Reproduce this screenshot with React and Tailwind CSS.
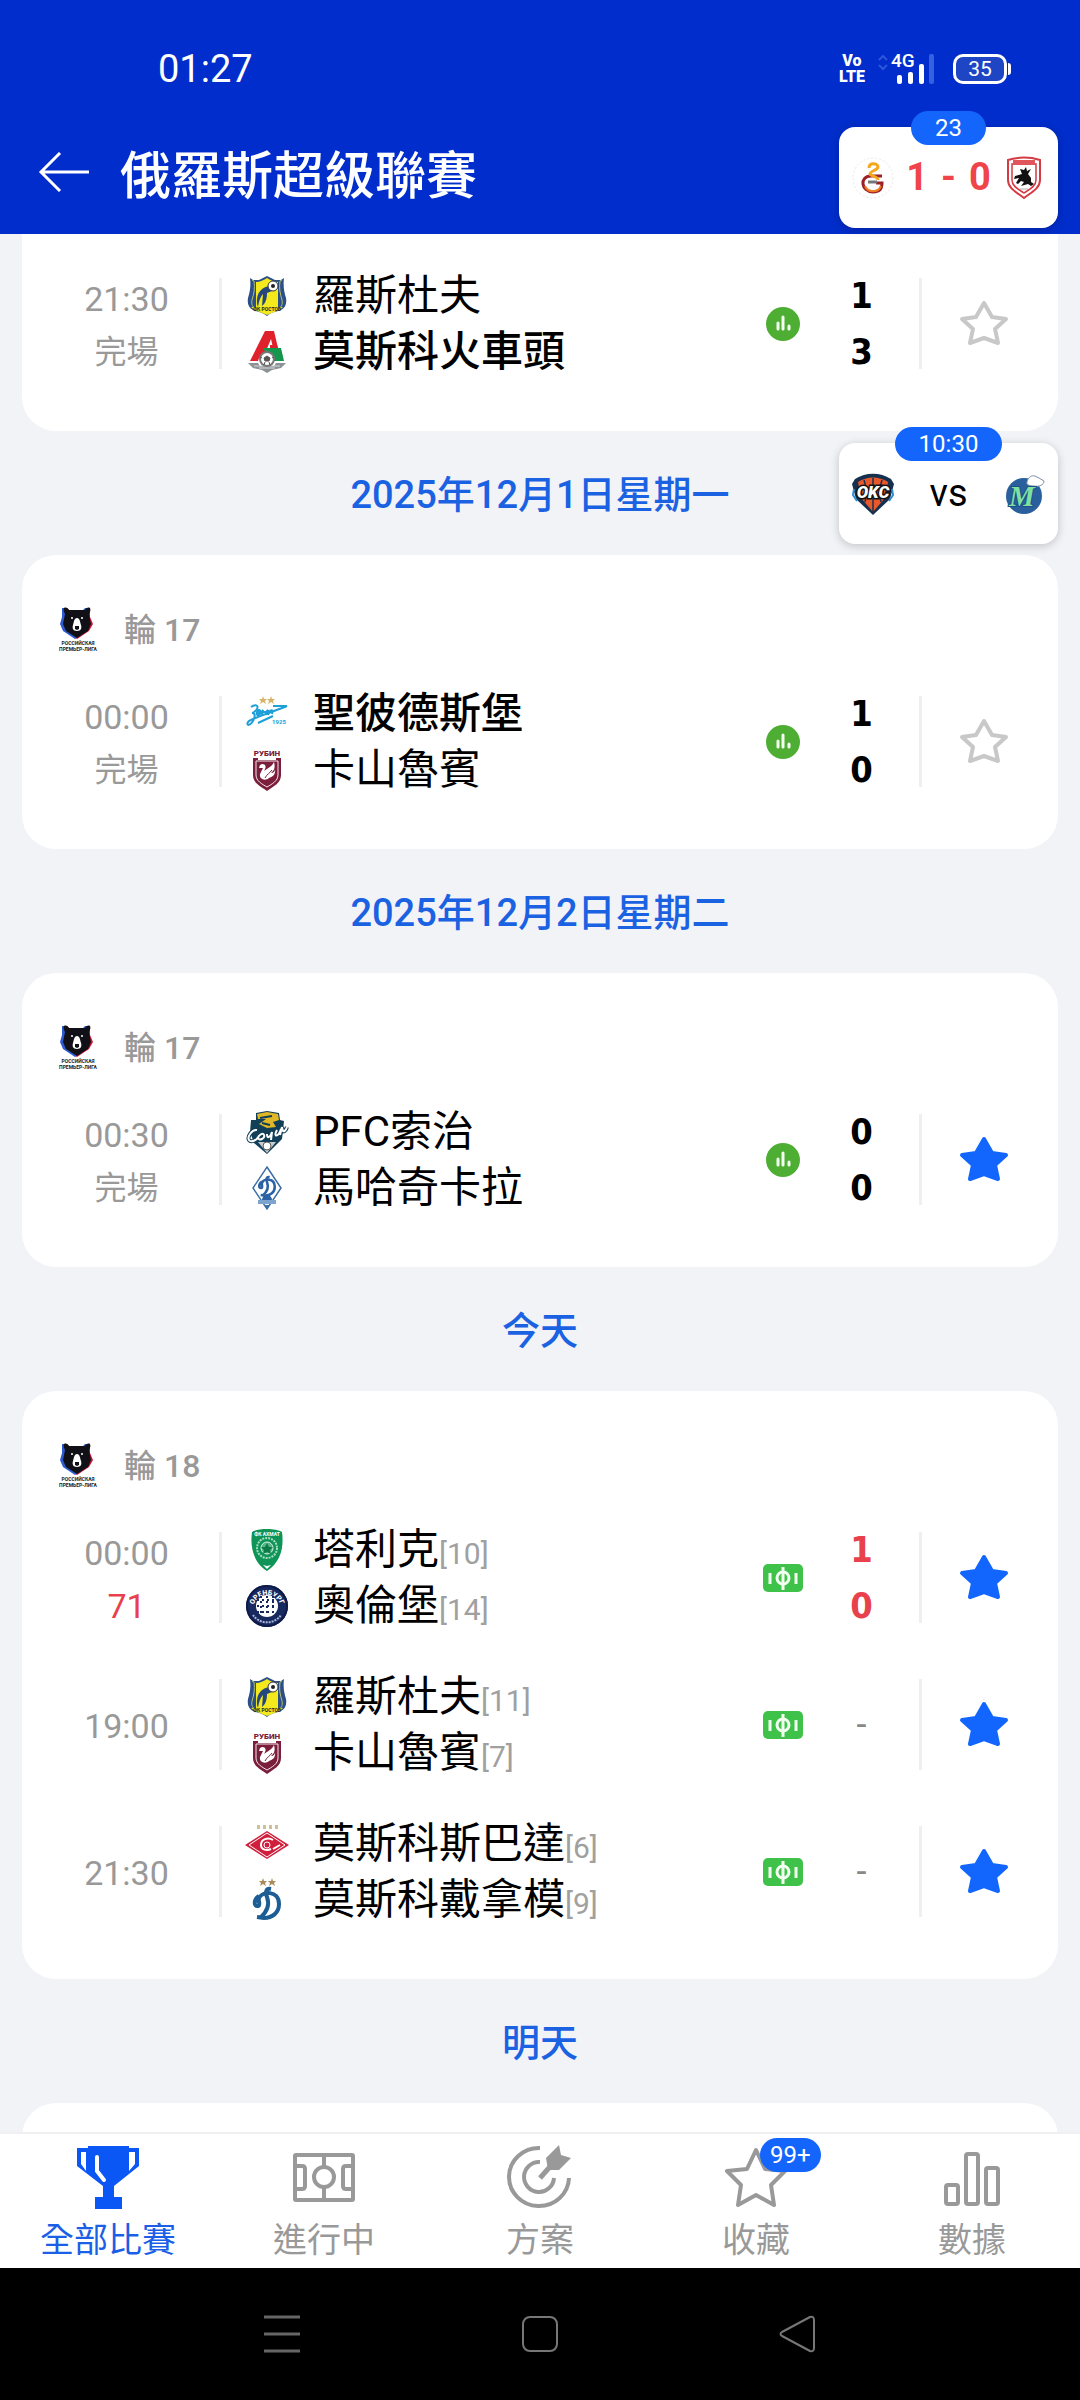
import { useState } from "react";

const LeagueLogo = () => (
    <svg viewBox="0 0 44 48" className="h-12 w-11" aria-hidden="true">
        <path d="M8 2l3 0 3 3h14l3-3h3v9l3 7-4 7-12 8-12-8-4-7 3-7z" fill="#d3122f" />
        <path d="M6 2l3 0 3 3h14l3-3h3v9l2 7-3 7-12 8-12-8-3-7 2-7z" fill="#2d5bd0" />
        <path d="M8 2c2-1 4 0 5 2h16c1-2 3-3 5-2 1 2 0 4-1 6l2 10-3 7-11 7-11-7-3-7 2-10c-1-2-2-4-1-6z" fill="#111016" />
        <path d="M21 12c3 0 3 4 4 7s0 6-4 6-5-3-4-6 1-7 4-7z" fill="#fff" />
        <path d="M19 20h4v3l-2 1-2-1z" fill="#111016" />
        <circle cx="16" cy="12" r="1" fill="#fff" />
        <circle cx="26" cy="12" r="1" fill="#fff" />
        <text x="22" y="39" textAnchor="middle" fontSize="5" fontWeight="700" fill="#222">РОССИЙСКАЯ</text>
        <text x="22" y="45" textAnchor="middle" fontSize="5" fontWeight="700" fill="#222">ПРЕМЬЕР-ЛИГА</text>
    </svg>
);

const Rostov = () => (
    <>
        <path d="M5 4l3 2h6l8-4 8 4h6l3-2c-1 8 0 13 2 20 1 6-1 10-5 12-5 2-10 2-14 6-4-4-9-4-14-6-4-2-6-6-5-12 2-7 3-12 2-20z" fill="#2b4f86" />
        <path d="M7 6l2 1c1 8 0 12-2 19-1 5 1 7 3 8M37 6l-2 1c-1 8 0 12 2 19 1 5-1 7-3 8" fill="none" stroke="#b9c46a" />
        <path d="M11 8c4 0 8-2 11-4 3 2 7 4 11 4v25c-3 3-7 3-11 7-4-4-8-4-11-7z" fill="#f4e91c" />
        <path d="M25 12c-8 1-14 6-13 18l1 3c1-6 2-10 5-13l-1 12c4-3 5-8 5-13l5-2z" fill="#24477f" />
        <circle cx="28" cy="12" r="5" fill="#fff" stroke="#333" />
        <circle cx="28" cy="12" r="2" fill="#222" />
        <path d="M6 33h32l-4 3-12 5-12-5z" fill="#f4e91c" />
        <text x="22" y="37" textAnchor="middle" fontSize="5" fontWeight="700" fill="#222">ФК РОСТОВ</text>
    </>
);

const Lokomotiv = () => (
    <>
        <path d="M5 31h8l1-3h4L26 9l2 9h5L29 1h-9z" fill="#e0202b" />
        <path d="M18 18h18l3 13H25z" fill="#14964c" />
        <path d="M25 18h8l-1-3h-7z" fill="#e0202b" />
        <path d="M3 33h10l2 3h14l2-3h10l-5 5-9 2-5 3-5-3-9-2z" fill="#8d9295" />
        <path d="M9 36h26M14 38h16" stroke="#d6d9db" />
        <circle cx="22" cy="29" r="7" fill="#fff" stroke="#777" strokeWidth="2" />
        <path d="M22 26l3 2-1 3h-4l-1-3zM15 27l2 1M29 27l-2 1M19 35l1-3M25 35l-1-3" fill="#555" stroke="#555" />
    </>
);

const Zenit = () => (
    <>
        <path d="M18 4l1 3h3l-2 2 1 3-3-2-3 2 1-3-2-2h3zM26 4l1 3h3l-2 2 1 3-3-2-3 2 1-3-2-2h3z" fill="#d8b366" />
        <path d="M6 15c4-3 8-2 6 2-1 2-4 4-5 4 4 0 3 4 1 8-3 5-7 5-5 1 3-4 20-8 39-16H28" fill="none" stroke="#1e9fd8" strokeWidth="2" />
        <path d="M12 22c3-2 4-4 2-4s-4 6 0 5l4-5-1 5m1-3h3l2-2-2 5m4-5l-2 5m1-3c3-3 4-2 3 2M13 31l15-7" fill="none" stroke="#1e9fd8" strokeWidth="2" />
        <text x="34" y="32" textAnchor="middle" fontSize="6" fontWeight="700" fill="#1e9fd8">1925</text>
    </>
);

const Rubin = () => (
    <>
        <path d="M8 10h28v17c0 8-7 11-14 16C15 38 8 35 8 27z" fill="#7b1e3c" />
        <path d="M11 13h22v14c0 6-6 9-11 12-5-3-11-6-11-12z" fill="none" stroke="#f3e6ea" />
        <rect x="13" y="8" width="18" height="4" fill="#fff" />
        <text x="22" y="8" textAnchor="middle" fontSize="8" fontWeight="900" fill="#7b1e3c">РУБИН</text>
        <path d="M15 17c4-3 7 1 5 4l-2 5c1-6 8-5 11-12 2 7-1 9-3 11 3 0 4-2 4-4 1 6-3 8-6 9-3 3-10 2-9-4l3-6-4 0z" fill="#fff" />
        <path d="M20 30c2-4 5-5 7-8" fill="none" stroke="#7b1e3c" />
    </>
);

const Sochi = () => (
    <>
        <path d="M11 3l11-2 12 2 1 7 4 1-2 18-15 15L9 33 5 22l1-12 5 0z" fill="#123f58" />
        <path d="M12 4l10-2 11 2 1 6-6 2 3 5-9 1-8-4 7-5-8 0z" fill="#dfb727" />
        <path d="M15 8l12-2M17 13l8 2" stroke="#123f58" strokeWidth="2" />
        <path d="M13 32h18l-9 11z" fill="#c6ccd0" />
        <circle cx="22" cy="36" r="4" fill="#fff" stroke="#555" />
        <path d="M12 20c-5-1-10 7-8 10s8 0 9-3m2-2c4-4 6 2 2 4s-5-2-2-4m7-1c0 5 3 4 5-2l-1 8m6-10c-4 7 1 8 4-1m-1 6l2-8c1 8 4 3 5 0" fill="none" stroke="#123f58" strokeWidth="4" />
        <path d="M12 20c-5-1-10 7-8 10s8 0 9-3m2-2c4-4 6 2 2 4s-5-2-2-4m7-1c0 5 3 4 5-2l-1 8m6-10c-4 7 1 8 4-1m-1 6l2-8c1 8 4 3 5 0" fill="none" stroke="#fff" strokeWidth="2" />
    </>
);

const DynamoD = () => (
    <>
        <path d="M14 18c-6 4-5 11-1 10 3-1 0-4 1-8 3-7 20-8 20 6 0 9-7 14-15 14l-7-1" fill="none" stroke="currentColor" strokeWidth="4" />
        <path d="M26 11c-5-1-6 3-4 8 3 8 0 15-7 21" fill="none" stroke="currentColor" strokeWidth="4" />
    </>
);

const Makhachkala = () => (
    <>
        <path d="M22 1l14 21-14 21L8 22z" fill="#fff" stroke="#3b6ea5" strokeWidth="1.5" />
        <g transform="translate(8 4) scale(.64)" className="text-[#2a62a4]">
            <DynamoD />
        </g>
        <path d="M17 34a5 5 0 0 1 10 0z" fill="#2a62a4" />
        <path d="M13 34h18v4H13z" fill="#7da3cf" />
        <path d="M19 39h6l-3 4z" fill="#3b6ea5" />
    </>
);

const Terek = () => (
    <>
        <path d="M7 4c6-4 24-4 30 0 2 15-1 30-15 39C8 34 5 19 7 4z" fill="#0d9456" />
        <circle cx="22" cy="20" r="10" fill="none" stroke="#a8dcc2" strokeWidth="2" strokeDasharray="2 1" />
        <circle cx="22" cy="20" r="6" fill="#56b68a" stroke="#d7f0e4" />
        <path d="M22 15l2 4 4 0-3 3 1 4-4-2-4 2 1-4-3-3 4 0z" fill="#0d7a48" />
        <text x="22" y="8" textAnchor="middle" fontSize="5" fontWeight="700" fill="#fff">ФК АХМАТ</text>
        <path d="M18 37l4 1 4-1-4 4z" fill="#fff" />
    </>
);

const Orenburg = () => (
    <>
        <circle cx="22" cy="22" r="21" fill="#17295f" />
        <circle cx="22" cy="22" r="20" fill="none" stroke="#0e1b48" strokeWidth="2" />
        <path id="orenburg-ring" d="M8 25a14 14 0 1 1 28 0" fill="none" />
        <text fontSize="7" fontWeight="800" fill="#fff" textAnchor="middle">
            <textPath href="#orenburg-ring" startOffset="50%">ОРЕНБУРГ</textPath>
        </text>
        <circle cx="22" cy="22" r="11" fill="#fff" />
        <path d="M22 12v20M12 22h20M16 12v20M28 12v20M12 16h20M12 28h20" stroke="#17295f" strokeWidth="2" strokeDasharray="2 3" />
        <path d="M8 31a17 17 0 0 0 28 0" fill="none" stroke="#aab4d6" strokeWidth="2" strokeDasharray="2 1" />
    </>
);

const Spartak = () => (
    <>
        <path d="M12 3h3v4h-3zM18 3h3v4h-3zM24 3h3v4h-3zM30 3h3v4h-3z" fill="#cfc096" />
        <path d="M22 9l22 14-22 14L0 23z" fill="#cf1f3c" />
        <path d="M22 11l18 12-18 12L4 23z" fill="none" stroke="#fff" />
        <path d="M28 18c-5-3-12-1-12 5 0 5 6 6 10 4M28 27l7-4" fill="none" stroke="#fff" strokeWidth="2" />
        <circle cx="22" cy="23" r="3" fill="#cf1f3c" stroke="#fff" />
    </>
);

const DynamoMoscow = () => (
    <>
        <path d="M18 0l1 3h3l-2 2 1 3-3-2-3 2 1-3-2-2h3zM27 0l1 3h3l-2 2 1 3-3-2-3 2 1-3-2-2h3z" fill="#a88b58" />
        <g className="text-[#1b5d94]">
            <DynamoD />
        </g>
    </>
);

const Galatasaray = () => (
    <>
        <circle cx="22" cy="22" r="20" fill="#fff" stroke="#e8e8e8" strokeDasharray="2 2" />
        <path d="M31 20H20c-12 0-10 16 2 16 7 0 9-3 9-9h-6" fill="none" stroke="#9c2025" strokeWidth="3" />
        <path d="M14 30c3 7 13 7 16 0" fill="none" stroke="#ee7d22" strokeWidth="2" />
        <path d="M18 12c0-6 9-5 9-1 0 3-8 4-8 7 0 2 8 2 8 6" fill="none" stroke="#f5a81c" strokeWidth="3" />
        <path d="M17 26h9" stroke="#777" strokeWidth="3" />
    </>
);

const Samsunspor = () => (
    <>
        <path d="M6 4c10-3 22-3 32 0v20c0 9-10 13-16 18C16 37 6 33 6 24z" fill="#fff" stroke="#d43b42" strokeWidth="2" />
        <path d="M10 8h24v16c0 7-8 10-12 13-4-3-12-6-12-13z" fill="#fff" stroke="#d43b42" strokeWidth="1.5" />
        <rect x="11" y="4" width="22" height="5" fill="#e0565c" />
        <path d="M13 20l7-2-2-5 4 1 2-3 1 4 4-2-3 5 3 4v4l3 2-3 2-3-2-7 2 3-4-3-1-3 3-2-1 3-5-5 1z" fill="#111" />
        <path d="M18 33h8" stroke="#aaa" />
    </>
);

const Thunder = () => (
    <>
        <path d="M1 12l3-5c11-7 25-7 36 0l3 5-4 15-17 16L5 27z" fill="#16314f" />
        <path d="M7 10c9-6 21-6 30 0l-3 16-12 14L10 26z" fill="#e8582b" />
        <path d="M22 6v34M13 8c3 8 3 14 1 22M31 8c-3 8-3 14-1 22" fill="none" stroke="#16314f" strokeWidth="1.5" />
        <path d="M3 17l-1 6 4 6M41 17l1 6-4 6" fill="none" stroke="#2f8fd0" strokeWidth="2" />
        <text x="22" y="26" textAnchor="middle" fontSize="17" fontWeight="900" fontStyle="italic" fill="#fff" stroke="#111" strokeWidth="3" paintOrder="stroke">OKC</text>
    </>
);

const Mavericks = () => (
    <>
        <circle cx="22" cy="24" r="18" fill="#2a5f9e" />
        <path d="M25 10c1-5 5-7 8-6l4 2 5 3c0 4-5 6-10 5-4 0-8-1-7-4z" fill="#fff" stroke="#7e8fa3" />
        <text x="20" y="34" textAnchor="middle" fontSize="29" fontWeight="900" fontStyle="italic" fill="#7fe0a2" stroke="#1c4f86" strokeWidth="2" paintOrder="stroke" className="font-['Liberation_Serif',serif]">M</text>
    </>
);

const logos = {
    rostov: Rostov,
    lokomotiv: Lokomotiv,
    zenit: Zenit,
    rubin: Rubin,
    sochi: Sochi,
    makhachkala: Makhachkala,
    terek: Terek,
    orenburg: Orenburg,
    spartak: Spartak,
    dynamo: DynamoMoscow,
    galatasaray: Galatasaray,
    samsunspor: Samsunspor,
    thunder: Thunder,
    mavericks: Mavericks,
};

const Logo = ({ name }) => {
    const Drawing = logos[name];
    return (
        <svg viewBox="0 0 44 44" className="size-11 shrink-0 overflow-visible" aria-hidden="true">
            <Drawing />
        </svg>
    );
};

const StarIcon = ({ filled }) => (
    <svg viewBox="0 0 50 50" className="size-[50px]" strokeLinejoin="round" strokeWidth="4" aria-hidden="true">
        <path
            d="M25 4l8 14 14 2-11 10 3 14-14-5-14 5 3-14L3 20l14-2z"
            fill={filled ? "#1266fe" : "none"}
            stroke={filled ? "#1266fe" : "#c8c8c8"}
        />
    </svg>
);

const StatsIcon = () => (
    <svg viewBox="0 0 34 34" className="size-[34px]" aria-label="技術統計">
        <circle cx="17" cy="17" r="17" fill="#4eae33" />
        <path d="M12 16v6M17 10v12M23 19v3" stroke="#f3fff0" strokeWidth="3" strokeLinecap="round" />
    </svg>
);

const PitchIcon = () => (
    <svg viewBox="0 0 40 28" className="h-7 w-10" aria-label="動畫直播">
        <rect width="40" height="28" rx="5" fill="#3fc24a" />
        <path d="M7 9v11M33 9v11M20 3v23" stroke="#f3fff0" strokeWidth="3" />
        <circle cx="20" cy="14" r="6" fill="none" stroke="#f3fff0" strokeWidth="3" />
    </svg>
);

const days = [
    {
        matches: [
            { time: "21:30", status: "完場", starred: false, icon: "stats", teams: [{ logo: "rostov", name: "羅斯杜夫", score: 1 }, { logo: "lokomotiv", name: "莫斯科火車頭", score: 3, winner: true }] },
        ],
    },
    {
        date: "2025年12月1日星期一",
        round: 17,
        matches: [
            { time: "00:00", status: "完場", starred: false, icon: "stats", teams: [{ logo: "zenit", name: "聖彼德斯堡", score: 1, winner: true }, { logo: "rubin", name: "卡山魯賓", score: 0 }] },
        ],
    },
    {
        date: "2025年12月2日星期二",
        round: 17,
        matches: [
            { time: "00:30", status: "完場", starred: true, icon: "stats", teams: [{ logo: "sochi", name: "PFC索治", score: 0 }, { logo: "makhachkala", name: "馬哈奇卡拉", score: 0 }] },
        ],
    },
    {
        date: "今天",
        round: 18,
        matches: [
            { time: "00:00", status: "71", live: true, starred: true, icon: "pitch", teams: [{ logo: "terek", name: "塔利克", rank: 10, score: 1 }, { logo: "orenburg", name: "奧倫堡", rank: 14, score: 0 }] },
            { time: "19:00", starred: true, icon: "pitch", teams: [{ logo: "rostov", name: "羅斯杜夫", rank: 11 }, { logo: "rubin", name: "卡山魯賓", rank: 7 }] },
            { time: "21:30", starred: true, icon: "pitch", teams: [{ logo: "spartak", name: "莫斯科斯巴達", rank: 6 }, { logo: "dynamo", name: "莫斯科戴拿模", rank: 9 }] },
        ],
    },
    { date: "明天", matches: [] },
];

const MatchRow = ({ match }) => {
    const [starred, setStarred] = useState(match.starred);
    const hasScore = match.teams[0].score !== undefined;

    return (
        <li className="flex h-[147px] items-center">
            <div className="flex w-[197px] flex-col items-center pt-1 pl-3 text-[34px] leading-[53px] text-[#999]">
                <span>{match.time}</span>
                {match.status && (
                    <span className={match.live ? "text-[#e8414b]" : "text-[32px]"}>{match.status}</span>
                )}
            </div>
            <div className="h-[91px] w-[3px] bg-[#efeff1]" />
            <div className="flex-1 pl-[23px]">
                {match.teams.map((team) => (
                    <div key={team.logo} className="flex h-14 items-center gap-6">
                        <Logo name={team.logo} />
                        <span className={team.winner ? "text-[42px] font-medium text-black" : "text-[42px] text-black"}>
                            {team.name}
                            {team.rank && <span className="text-[30px] text-[#a0a0a0]">[{team.rank}]</span>}
                        </span>
                    </div>
                ))}
            </div>
            <div className="flex w-[42px] justify-center">{match.icon === "stats" ? <StatsIcon /> : <PitchIcon />}</div>
            <div className="flex w-[115px] flex-col items-center">
                {hasScore ? (
                    match.teams.map((team) => (
                        <span
                            key={team.logo}
                            className={`font-['DejaVu_Sans_Condensed','DejaVu_Sans',sans-serif] text-[36px] leading-14 font-bold ${match.live ? "text-[#e8414b]" : "text-black"}`}
                        >
                            {team.score}
                        </span>
                    ))
                ) : (
                    <span className="text-[36px] text-[#888]">-</span>
                )}
            </div>
            <div className="h-[91px] w-[3px] bg-[#efeff1]" />
            <div className="flex w-[136px] justify-center pr-3">
                <button type="button" aria-label="收藏" aria-pressed={starred} onClick={() => setStarred(!starred)}>
                    <StarIcon filled={starred} />
                </button>
            </div>
        </li>
    );
};

const DaySection = ({ day }) => (
    <section>
        {day.date && (
            <h2 className="flex h-[124px] items-center justify-center pt-1 text-[38px] font-medium text-[#1b62e2]">{day.date}</h2>
        )}
        <div className={day.date ? "rounded-[34px] bg-white pt-9 pb-[34px]" : "rounded-b-[34px] bg-white pt-4 pb-[34px]"}>
            {day.round && (
                <div className="flex h-[77px] items-center gap-6 pl-[34px] text-[32px] font-medium text-[#999]">
                    <LeagueLogo />
                    <span>輪 {day.round}</span>
                </div>
            )}
            <ul>
                {day.matches.map((match) => (
                    <MatchRow key={match.time} match={match} />
                ))}
            </ul>
        </div>
    </section>
);

const FloatCard = ({ label, home, away, children }) => (
    <button type="button" className="relative flex h-[101px] w-[219px] items-center justify-between rounded-2xl bg-white px-3 shadow-[0_2px_10px_rgba(0,0,0,0.2)]">
        <span className="absolute inset-x-0 -top-4 flex justify-center">
            <span className="h-[34px] rounded-full bg-[#1465fc] px-6 text-[24px] leading-[34px] text-white">{label}</span>
        </span>
        <Logo name={home} />
        {children}
        <Logo name={away} />
    </button>
);

const StatusBar = () => (
    <div className="flex h-[138px] items-center justify-between pr-[69px] pl-[158px] text-white">
        <span className="text-[38px]">01:27</span>
        <div className="flex items-center">
            <span className="mr-3 flex flex-col items-center text-[16px] leading-4 font-black">
                <span>Vo</span>
                <span>LTE</span>
            </span>
            <div className="relative mr-[18px]">
                <svg viewBox="0 0 58 32" className="h-8 w-[58px]" aria-hidden="true">
                    <path d="M2 7l4-4 4 4M2 12l4 4 4-4" fill="none" stroke="#2c57d8" strokeWidth="2" />
                    <rect x="20" y="22" width="5" height="9" rx="2" fill="#fff" />
                    <rect x="31" y="19" width="5" height="12" rx="2" fill="#fff" />
                    <rect x="42" y="11" width="5" height="20" rx="2" fill="#fff" />
                    <rect x="52" y="1" width="5" height="30" rx="2" fill="#3560df" />
                </svg>
                <span className="absolute -top-0.5 left-3.5 text-[19px] leading-5 font-medium">4G</span>
            </div>
            <span className="h-[30px] w-[54px] rounded-[10px] border-3 border-white bg-[#1e45c4] text-center text-[21px] leading-6">35</span>
            <span className="ml-px h-3 w-[3px] rounded-r-sm bg-white" />
        </div>
    </div>
);

const Header = () => (
    <header className="h-[234px] shrink-0 bg-[#002dcb]">
        <StatusBar />
        <div className="flex items-start gap-[30px] pl-[38px] text-white">
            <button type="button" aria-label="返回" className="mt-3.5">
                <svg viewBox="0 0 52 40" className="h-10 w-[52px]" fill="none" stroke="currentColor" strokeWidth="3" aria-hidden="true">
                    <path d="M22 1L3 20l19 19M3 20h48" />
                </svg>
            </button>
            <h1 className="text-[51px] leading-[78px] font-medium">俄羅斯超級聯賽</h1>
        </div>
    </header>
);

const TrophyIcon = () => (
    <svg viewBox="0 0 66 66" className="size-[66px]" aria-hidden="true">
        <path d="M13 2h41v2h10v18L39 42v11h8v12H20V53h8V42L2 22V4h11z" fill="#0a57f5" />
        <path d="M6 8h5v19l-5-7zM54 8h6v12l-6 7z" fill="#fff" />
        <path d="M22 13v14l7 9" fill="none" stroke="#fff" strokeWidth="4" strokeLinecap="round" />
    </svg>
);

const FieldIcon = () => (
    <svg viewBox="0 0 66 66" className="size-[66px]" fill="none" stroke="#999" strokeWidth="4" aria-hidden="true">
        <rect x="4" y="11" width="58" height="45" rx="1" />
        <path d="M33 11v13M33 43v13M4 22h7q3 0 3 3v17q0 3-3 3H4M62 22h-7q-3 0-3 3v17q0 3 3 3h7" />
        <circle cx="33" cy="33" r="10" />
    </svg>
);

const TargetIcon = () => (
    <svg viewBox="0 0 66 66" className="size-[66px]" fill="none" stroke="#999" strokeWidth="4" aria-hidden="true">
        <path d="M33 4a30 29 0 1 0 29 30" />
        <path d="M33 18a15 15 0 1 0 14 16" />
        <path d="M33 34l16-18" strokeWidth="5" />
        <path d="M39 14L52 1l2 10 10 3-12 12H41z" fill="#999" stroke="none" />
    </svg>
);

const FavouriteIcon = () => (
    <svg viewBox="0 0 66 66" className="size-[66px]" fill="none" stroke="#999" strokeWidth="4" strokeLinejoin="round" aria-hidden="true">
        <path d="M33 6l9 19 20 2-14 14 3 20-18-10-18 10 3-20L4 27l20-2z" />
    </svg>
);

const ChartIcon = () => (
    <svg viewBox="0 0 66 66" className="size-[66px]" fill="none" stroke="#999" strokeWidth="4" aria-hidden="true">
        <rect x="7" y="41" width="12" height="19" rx="2" />
        <rect x="27" y="10" width="12" height="50" rx="2" />
        <rect x="47" y="24" width="12" height="36" rx="2" />
    </svg>
);

const tabs = [
    { label: "全部比賽", Icon: TrophyIcon, active: true },
    { label: "進行中", Icon: FieldIcon },
    { label: "方案", Icon: TargetIcon },
    { label: "收藏", Icon: FavouriteIcon, badge: "99+" },
    { label: "數據", Icon: ChartIcon },
];

const TabBar = () => (
    <nav className="z-10 grid h-[136px] shrink-0 grid-cols-5 border-t-2 border-[#f0f0f2] bg-white">
        {tabs.map(({ label, Icon, active, badge }) => (
            <a key={label} href="#" className={`flex flex-col items-center gap-1 pt-2.5 text-[34px] leading-[52px] ${active ? "text-[#1b5fe6]" : "text-[#999]"}`}>
                <span className="relative">
                    <Icon />
                    {badge && (
                        <span className="absolute -top-1.5 left-[37px] rounded-full bg-[#1465fc] px-2.5 text-[24px] leading-[34px] text-white">{badge}</span>
                    )}
                </span>
                {label}
            </a>
        ))}
    </nav>
);

const SystemBar = () => (
    <div className="grid h-[132px] shrink-0 grid-cols-3 place-items-center bg-black px-[153px]">
        <button type="button" aria-label="最近">
            <svg viewBox="0 0 38 38" className="size-[38px]" stroke="#666" strokeWidth="3" aria-hidden="true">
                <path d="M1 2h36M1 19h36M1 36h36" />
            </svg>
        </button>
        <button type="button" aria-label="主畫面">
            <svg viewBox="0 0 38 38" className="size-[38px]" fill="none" stroke="#777" strokeWidth="2" aria-hidden="true">
                <rect x="2" y="2" width="34" height="34" rx="7" />
            </svg>
        </button>
        <button type="button" aria-label="返回上一頁">
            <svg viewBox="0 0 38 38" className="size-[38px]" fill="none" stroke="#777" strokeWidth="2" strokeLinejoin="round" aria-hidden="true">
                <path d="M3 17L31 2q4-1 4 3v28q0 4-4 3L3 21q-3-2 0-4z" />
            </svg>
        </button>
    </div>
);

const App = () => (
    <div className="relative flex h-screen flex-col overflow-hidden bg-[#f2f3f7] font-['Roboto','Noto_Sans_CJK_TC',sans-serif]">
        <Header />
        <main className="min-h-0 flex-1 overflow-hidden px-[22px]">
            {days.map((day, index) => (
                <DaySection key={index} day={day} />
            ))}
        </main>
        <TabBar />
        <SystemBar />

        {/* followed matches float over the list */}
        <aside className="absolute top-[127px] right-[22px] z-20 flex flex-col gap-[215px]">
            <FloatCard label="23" home="galatasaray" away="samsunspor">
                <span className="flex gap-[13px] text-[38px] font-bold text-[#f0444a]">
                    <span>1</span>
                    <span>-</span>
                    <span>0</span>
                </span>
            </FloatCard>
            <FloatCard label="10:30" home="thunder" away="mavericks">
                <span className="text-[38px] text-black">vs</span>
            </FloatCard>
        </aside>
    </div>
);

export default App;
